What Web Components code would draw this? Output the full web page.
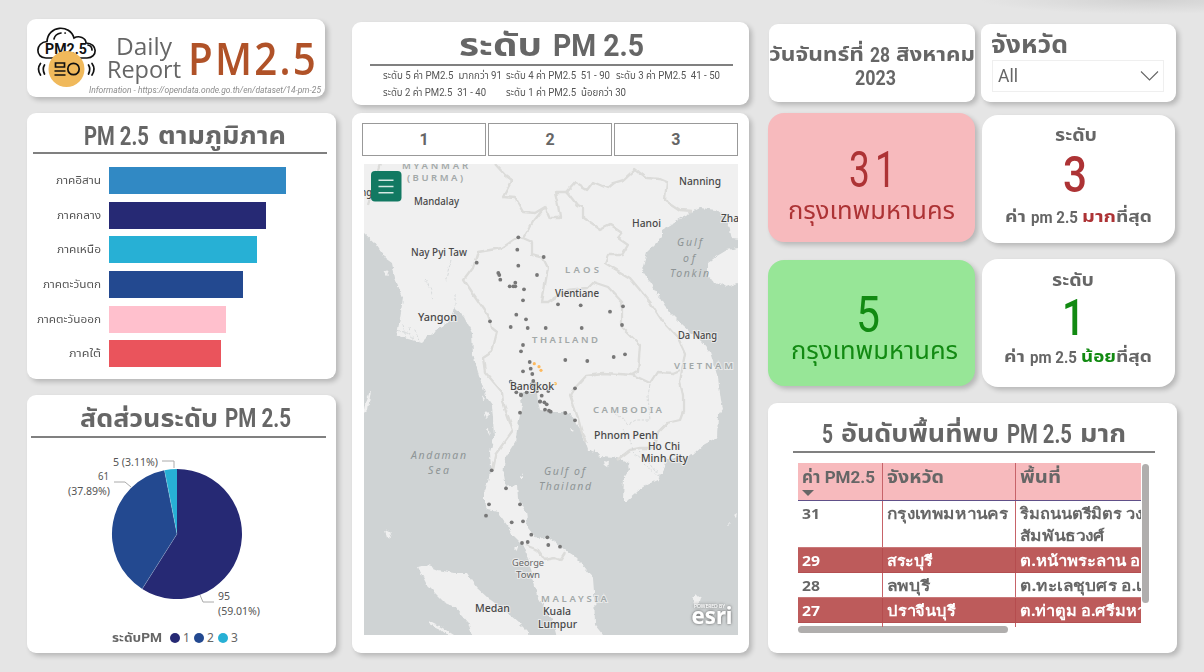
<!DOCTYPE html>
<html lang="th">
<head>
<meta charset="utf-8">
<title>PM2.5 Daily Report</title>
<style>
body { margin: 0; overflow: hidden; }
</style>
</head>
<body>
<pm-dashboard></pm-dashboard>
<script>
const FONT = 'Roboto, "Noto Sans Thai", "Noto Sans", sans-serif';

/* One line of text set in a box of fixed width: the glyphs are condensed or widened to fill it. */
class FitText extends HTMLElement {
  connectedCallback() {
    if (this.shadowRoot) return;
    const a = n => this.getAttribute(n);
    this.attachShadow({ mode: 'open' }).innerHTML = `<style>
      :host { display: block; flex: none; width: ${a('w')}px; height: ${a('h')}px; line-height: ${a('h')}px; font-size: ${a('s')}px; white-space: pre; }
      span { display: inline-block; transform-origin: 0 50%; line-height: inherit; vertical-align: top; }
    </style><span><slot></slot></span>`;
    const s = this.shadowRoot.querySelector('span');
    const width = s.getBoundingClientRect().width;
    if (width) s.style.transform = `scaleX(${(+a('w') / width).toFixed(4)})`;
  }
}

/* A row of fitted runs, for lines that mix Thai and Latin text. */
class TextLine extends HTMLElement {
  connectedCallback() {
    if (this.shadowRoot) return;
    this.attachShadow({ mode: 'open' }).innerHTML = `<style>
      :host { display: flex; flex: none; gap: var(--gap, 8px); }
    </style><slot></slot>`;
  }
}

class DashCard extends HTMLElement {
  connectedCallback() {
    if (this.shadowRoot) return;
    this.attachShadow({ mode: 'open' }).innerHTML = `<style>
      :host { display: flex; flex-direction: column; box-sizing: border-box; flex: none; background: #fff; border-radius: 9px; box-shadow: 3px 3px 5px rgba(0,0,0,.2); }
    </style><slot></slot>`;
  }
}

class ReportHeader extends HTMLElement {
  connectedCallback() {
    this.attachShadow({ mode: 'open' }).innerHTML = `<style>
      :host { display: block; font-family: "Open Sans", sans-serif; color: #666; }
      .row { display: flex; height: 64px; }
      svg { width: 64px; height: 64px; margin: 6px 0 0 8px; flex: none; }
      .t { display: flex; flex-direction: column; align-items: center; width: 74px; margin: 16px 0 0 8px; }
      .p { margin: 17px 0 0 7px; color: #b05228; font-weight: 600; letter-spacing: 2.500px; }
      .i { margin: 1px 0 0 62px; font-style: italic; color: #8c8c8c; font-family: Roboto, sans-serif; }
    </style>
    <div class="row">
      <svg viewBox="35 25 64 64" fill="none" stroke="#111" stroke-width="1.7" stroke-linecap="round">
        <path d="M46 58C35 58 35 42.500 47 41.500C48 25 70 24 74 38C79 35 86 38 86 43C98 43 98 58 87 58Z"/>
        <path d="M54 39Q55 34 61 33M65 33h.3M88 45Q92 46 92 50"/>
        <text x="45" y="54" textLength="42" lengthAdjust="spacingAndGlyphs" font-family="Roboto,sans-serif" font-weight="700" font-size="15.500" fill="#111" stroke="none">PM2.5</text>
        <circle cx="66.500" cy="69" r="18" fill="#f0b95b" stroke="none"/>
        <path stroke-linecap="butt" d="M55.500 63h9v4h-9zM54.500 71h11M54.500 75h11"/><circle cx="73.500" cy="69" r="5.700"/>
        <path d="M44.500 65Q42 69 44.500 74M40.500 63.500Q36.500 69 40.500 75M88.500 65Q91 69 88.500 74M92 63.500Q96 69 92 75"/>
      </svg>
      <div class="t"><fit-text w="56" h="23" s="23">Daily</fit-text><fit-text w="74" h="22" s="23">Report</fit-text></div>
      <fit-text class="p" w="130" h="43" s="45">PM2.5</fit-text>
    </div>
    <fit-text class="i" w="232" h="12" s="9">Information - https://opendata.onde.go.th/en/dataset/14-pm-25</fit-text>`;
  }
}

class LevelLegend extends HTMLElement {
  connectedCallback() {
    this.attachShadow({ mode: 'open' }).innerHTML = `<style>
      :host { display: flex; flex-direction: column; color: #555; }
      .h { margin: 5px 0 0 107px; color: #666; font-weight: 700; --gap: 11px; }
      .r { height: 2px; background: #808080; margin: 0 16px 0 18px; }
      .g { display: grid; grid-template-columns: 123px 110px 105px; grid-auto-rows: 17px; margin: 1px 0 0 31px; }
    </style>
    <text-line class="h"><fit-text w="83" h="37" s="32">ระดับ</fit-text><fit-text w="91" h="37" s="32">PM 2.5</fit-text></text-line>
    <div class="r"></div>
    <div class="g">
      <fit-text w="119" h="17" s="10">ระดับ 5 ค่า PM2.5  มากกว่า 91</fit-text>
      <fit-text w="104" h="17" s="10">ระดับ 4 ค่า PM2.5  51 - 90</fit-text>
      <fit-text w="104" h="17" s="10">ระดับ 3 ค่า PM2.5  41 - 50</fit-text>
      <fit-text w="103" h="17" s="10">ระดับ 2 ค่า PM2.5  31 - 40</fit-text>
      <fit-text w="120" h="17" s="10">ระดับ 1 ค่า PM2.5  น้อยกว่า 30</fit-text>
    </div>`;
  }
}

class RegionBars extends HTMLElement {
  connectedCallback() {
    const rows = [['ภาคอิสาน', 45, 176.500, '#3189c4'], ['ภาคกลาง', 44, 156.500, '#262974'], ['ภาคเหนือ', 44, 147.500, '#27b0d5'],
      ['ภาคตะวันตก', 58, 134, '#234990'], ['ภาคตะวันออก', 64, 116.500, '#ffc0cd'], ['ภาคใต้', 32, 111.500, '#ea545c']];
    this.attachShadow({ mode: 'open' }).innerHTML = `<style>
      :host { display: block; color: #555; }
      .h { margin: 8px 0 0 57px; color: #666; font-weight: 700; --gap: 9px; }
      .r { height: 2px; background: #808080; margin: 0 9px 13px 6px; }
      .b { display: flex; align-items: center; gap: 8px; height: 27px; margin-bottom: 7.700px; }
      .l { width: 74px; display: flex; justify-content: flex-end; padding-top: 1px; }
      .v { height: 27px; }
    </style>
    <text-line class="h"><fit-text w="65" h="31" s="25">PM 2.5</fit-text><fit-text w="128" h="31" s="24">ตามภูมิภาค</fit-text></text-line><div class="r"></div>
    ${rows.map(([n, w, v, c]) => `<div class="b"><div class="l"><fit-text w="${w}" h="20" s="11">${n}</fit-text></div><div class="v" style="width:${v}px;background:${c}"></div></div>`).join('')}`;
  }
}

class SharePie extends HTMLElement {
  connectedCallback() {
    this.attachShadow({ mode: 'open' }).innerHTML = `<style>
      :host { display: block; color: #666; }
      .h { margin: 8px 0 0 53px; font-weight: 700; --gap: 7px; }
      .r { height: 2px; background: #808080; margin: 1px 10px 1px 4px; }
      svg { display: block; width: 309px; height: 192px; font: 11px "Noto Sans", sans-serif; fill: #555; }
      .k { display: flex; align-items: center; height: 16px; margin: -1px 0 0 85px; font: 12px "Noto Sans", sans-serif; }
      .k i { width: 10px; height: 10px; border-radius: 50%; margin: 0 3px 0 4px; }
      .k span { width: 7px; line-height: 16px; }
      .k fit-text { font-weight: 700; margin-right: 4px; font-family: ${FONT.replace(/"/g, "'")}; }
    </style>
    <text-line class="h"><fit-text w="138" h="32" s="24">สัดส่วนระดับ</fit-text><fit-text w="66" h="32" s="25">PM 2.5</fit-text></text-line><div class="r"></div>
    <svg viewBox="27 439 309 192">
      <path fill="#262974" d="M177 534V469A65 65 0 1 1 142.200 588.900Z"/>
      <path fill="#234990" d="M177 534L142.200 588.900A65 65 0 0 1 164.400 470.200Z"/>
      <path fill="#27b0d5" d="M177 534L164.400 470.200A65 65 0 0 1 177 469Z"/>
      <path d="M177 534L142.200 588.900M177 534L164.400 470.200" stroke="#fff" stroke-opacity=".35" stroke-width=".6"/>
      <path d="M162 461h12v7M114 482h11l6 5M200 595l3 7h11" fill="none" stroke="#aaa"/>
      <text x="113" y="466" textLength="45" lengthAdjust="spacingAndGlyphs">5 (3.11%)</text>
      <text x="98" y="480" textLength="11" lengthAdjust="spacingAndGlyphs">61</text>
      <text x="68" y="495" textLength="42" lengthAdjust="spacingAndGlyphs">(37.89%)</text>
      <text x="218" y="600" textLength="12" lengthAdjust="spacingAndGlyphs">95</text>
      <text x="218" y="615" textLength="42" lengthAdjust="spacingAndGlyphs">(59.01%)</text>
    </svg>
    <div class="k"><fit-text w="50" h="16" s="13">ระดับPM</fit-text><i style="background:#262974"></i><span>1</span><i style="background:#234990"></i><span>2</span><i style="background:#27b0d5"></i><span>3</span></div>`;
  }
}

class LevelTabs extends HTMLElement {
  connectedCallback() {
    this.attachShadow({ mode: 'open' }).innerHTML = `<style>
      :host { display: grid; grid-template-columns: repeat(3, 1fr); gap: 1.500px; margin: 10px 11px 0 10px; height: 33px; flex: none; }
      div { border: 1px solid #999; text-align: center; font: 700 16px/31px ${FONT}; color: #666; }
    </style><div>1</div><div>2</div><div>3</div>`;
  }
}

class PmMap extends HTMLElement {
  connectedCallback() {
    const grey = [
      [355, 155, [490,247,487,284,490,332,566,306,365,323,430,354,433,360,436,374,481,383,464,394,475,394,481,394,507,403,546,360,504,436,484,479,513,493,405,499,467,516,518,519,572,519,504,570,498,589,524,621,527,641,532,657,504,649,467,680,484,712,498,720,535,678,530,688,540,688,535,695,515,712,546,708,560,722,555,740,580,708]],
      [550, 155, [24,448,92,451,180,470,219,454,216,510,95,519,46,615,112,618,191,606,225,598,75,700]],
      [355, 395, [498,0,555,19,568,22,575,28,570,44,582,47,495,53,410,226,453,280,402,328,393,362,495,328,470,382,504,379,529,419,501,444,518,441,577,427,580,450]],
      [550, 395, [2,50,46,54,75,76,30,455]]];
    const amber = [[355, 155, [538,626,552,635,558,646,601,686]]];
    const dots = (sets, r) => sets.map(([ox, oy, p]) => {
      let s = '';
      for (let i = 0; i < p.length; i += 2) s += `<circle cx="${(ox + p[i] / 3).toFixed(1)}" cy="${(oy + p[i + 1] / 3).toFixed(1)}" r="${r}"/>`;
      return s;
    }).join('');
    const t = (x, y, w, s) => `<text x="${x}" y="${y}" textLength="${w}" lengthAdjust="spacingAndGlyphs">${s}</text>`;
    const sp = (x, y, w, s) => `<text x="${x}" y="${y}" textLength="${w}">${s}</text>`;
    this.attachShadow({ mode: 'open' }).innerHTML = `<style>
      :host { display: block; margin: 8px 0 0 12px; width: 374px; height: 471px; }
      svg { display: block; width: 374px; height: 471px; background: #f0f0f0; font-family: "Noto Sans", sans-serif; }
      .halo text { paint-order: stroke; stroke: #f0f0f0; stroke-width: 2px; stroke-opacity: .8; }
    </style>
    <svg viewBox="364 164 374 471">
      <defs>
        <filter id="rough" x="-5%" y="-5%" width="110%" height="110%"><feTurbulence type="fractalNoise" baseFrequency=".16" numOctaves="3" seed="4"/><feDisplacementMap in="SourceGraphic" scale="5" xChannelSelector="R" yChannelSelector="G"/></filter>
        <filter id="soft" x="-5%" y="-5%" width="110%" height="110%"><feTurbulence type="fractalNoise" baseFrequency=".1" numOctaves="2" seed="9"/><feDisplacementMap in="SourceGraphic" scale="4" xChannelSelector="R" yChannelSelector="G"/></filter>
        <filter id="glow"><feDropShadow dx="0" dy="0" stdDeviation="1.500" flood-color="#555"/></filter>
      </defs>
      <g filter="url(#rough)">
        <g fill="#cfd3d4">
          <path d="M340 225L364 233L375 243L385 258L392 263L395 278L403 298L400 318L397 335L408 339L422 343L433 332L447 323L453 315L455 308L465 318L472 332L473 355L478 372L483 388L487 398L492 405L493 418L494 438L490 452L491 467L488 482L484 492L484 502L488 510L498 512L507 525L513 535L525 547L529 562L533 578L537 595L545 608L553 622L560 650L340 650Z"/>
          <path d="M603 650V635L595 625L594 592L593 578L583 565L573 555L565 550L555 542L548 537L537 539L528 528L526 512L518 498L517 485L505 487L503 475L505 458L515 442L518 425L522 405L520 393L530 391L537 393L538 402L540 410L552 412L565 412L575 420L583 435L588 450L594 450L600 457L617 458L628 463L629 470L624 478L623 500L628 500L643 487L658 480L665 467L667 458L680 459L693 455L705 444L717 438L718 415L723 408L721 400L718 378L710 352L702 342L683 325L665 307L658 295L652 285L642 270L647 252L662 237L662 230L683 217L700 208L717 210L727 218L732 238L760 241V650Z"/>
        </g>
        <g fill="#f0f0f0">
          <path d="M760 248L738 248L727 250L717 256L708 263L708 278L718 284L727 287L738 283L760 280Z"/>
          <path d="M418 567L425 565L438 570L455 573L467 573L477 588L488 598L502 608L518 622L528 632L529 650H472V635L468 622L455 607L445 603L427 585Z"/>
          <path d="M429 624L440 629L447 635H454L441 627L431 622ZM385 530l4 2 2 7-4-1zM366 404l4-14 1 0-3 20-4 4zM604 461l4 1-1 5-2-1zM590 450l4 0-1 4zM693 599l4-4 4 3-2 6-5-1zM514 547l4 0-1 3zM484 415l3-4 2 5-3 3zM487 430l2-1 1 6zM520 478l2-4 0 4zM726 526l4-4 1 1zM734 516l3-2-1 4zM378 512l2 2zM644 624l2-3zM609 624l2 3zM610 430l2 0zM570 428l4 3-3 1zM384 273l5-2-2 5zM482 395l3 4-2 1zM480 377l2 8z"/>
        </g>
        <path d="M425 280l6 9 2 11M451 260l-6 22M455 310v-16M403 323l3 16M409 328l4 13M415 330l4 11M397 330l13 4M638 451l8 7 15 20M632 450l14 15 14 13" stroke="#cfd3d4" stroke-width=".8" stroke-dasharray="3 1.500" fill="none"/>
      </g>
      <g filter="url(#soft)">
        <path fill="none" stroke="#dcdcda" stroke-width="2.300" stroke-linejoin="round" d="M380 164L377 174L368 205M495 164L505 175L512 180L503 197L515 198L523 212L535 213L545 207L550 218L560 218L558 205L555 192L567 192L575 183L587 190L593 182L607 188L613 183L623 180L635 169L647 178L660 179L667 182L665 200L680 210L693 211M567 192L577 205L583 208L583 218L600 230L610 225L622 233L618 238L628 245L622 255L608 255L605 263L630 278L650 302L663 322L678 338L685 353L680 382L683 395L683 412L680 420L667 423L658 432L655 448L640 448L630 450L617 460M545 207L533 222L523 238L518 237L502 248L478 252L473 268L464 280L472 292L488 315L492 328L497 332L492 352L483 358L485 372L502 392L503 402L513 430L495 455L492 470M523 238L532 242L532 255L543 258L548 268L542 302L548 302L567 290L587 288L593 282L608 287L622 302L622 327L640 345L638 372L633 375L603 373L587 375L573 390L570 395L578 418L582 433L587 442M633 375L650 383L657 372L673 373L680 370M525 545L538 550L545 560L555 558L560 560L565 552"/>
        <path fill="none" stroke="#d2d4d4" stroke-width=".8" stroke-dasharray="3 1.500" d="M650 385L648 395L650 420L636 420L628 424L614 412M633 450L630 440L623 428"/>
      </g>
      <g fill="#777">${dots(grey, 1.9)}</g><g fill="#fdb95e">${dots(amber, 1.6)}</g>
      <g class="halo">
        <g fill="#a2a8a8" font-size="9.500" font-weight="600">${sp(402,169,66,'MYANMAR')}${sp(407,181,56,'(BURMA)')}${sp(565,273,34,'LAOS')}${sp(532,343,66,'THAILAND')}${sp(674,369,59,'VIETNAM')}${sp(593,413,69,'CAMBODIA')}${sp(541,602,66,'MALAYSIA')}</g>
        <g fill="#484848" font-size="10.500" font-weight="500">${t(414,205,45,'Mandalay')}${t(411,256,56,'Nay Pyi Taw')}${t(418,321,39,'Yangon')}${t(679,185,42,'Nanning')}${t(632,227,29,'Hanoi')}${t(721,222,27,'Zhanj')}${t(555,297,44,'Vientiane')}${t(678,339,39,'Da Nang')}${t(510,390,44,'Bangkok')}${t(594,439,64,'Phnom Penh')}${t(648,450,32,'Ho Chi')}${t(641,462,47,'Minh City')}${t(475,612,35,'Medan')}${t(543,615,28,'Kuala')}${t(538,628,39,'Lumpur')}${t(355,196,17,'ong')}</g>
        <g fill="#666" font-size="9.500">${t(512,566,32,'George')}${t(516,578,24,'Town')}</g>
      </g>
      <g fill="#8e9596" font-size="10.500" font-style="italic">${sp(411,459,55,'Andaman')}${sp(428,474,21,'Sea')}${sp(544,475,41,'Gulf of')}${sp(539,490,52,'Thailand')}${sp(677,246,25,'Gulf')}${sp(683,262,12,'of')}${sp(670,277,39,'Tonkin')}</g>
      <g fill="#fff" filter="url(#glow)"><text x="691.500" y="624" font-size="24" font-weight="700" textLength="41" lengthAdjust="spacingAndGlyphs">esri</text><text x="694" y="608" font-size="4.500" textLength="31" lengthAdjust="spacingAndGlyphs">POWERED BY</text></g>
      <rect x="371" y="171" width="30.500" height="30.500" rx="4" fill="#127962"/>
      <path d="M378.500 180.200h15M378.500 186.500h15M378.500 192.800h15" stroke="#d6e9e4" stroke-width="1.500"/>
    </svg>`;
  }
}

class ProvinceFilter extends HTMLElement {
  connectedCallback() {
    this.attachShadow({ mode: 'open' }).innerHTML = `<style>
      :host { display: block; color: #666; }
      .h { margin: 5px 0 0 10px; font-weight: 700; }
      .s { display: flex; align-items: center; justify-content: space-between; box-sizing: border-box; width: 172px; height: 32px; margin: -1px 0 0 11px; padding: 0 4px 0 5px; border: 1px solid #efefef; }
    </style>
    <fit-text class="h" w="77" h="32" s="24">จังหวัด</fit-text>
    <div class="s"><fit-text w="20" h="30" s="19">All</fit-text><svg width="19" height="12" fill="none" stroke="#666" stroke-width="1.100"><path d="M1 1.500L9.500 10L18 1.500"/></svg></div>`;
  }
}

class RankTable extends HTMLElement {
  connectedCallback() {
    const rows = [['31', 'กรุงเทพมหานคร', 121, 'ริมถนนตรีมิตร วงเวียน', 158, 46], ['29', 'สระบุรี', 46, 'ต.หน้าพระลาน อ.เฉลิม', 163, 25.500], ['28', 'ลพบุรี', 43, 'ต.ทะเลชุบศร อ.เมือง', 152, 24], ['27', 'ปราจีนบุรี', 69, 'ต.ท่าตูม อ.ศรีมหาโพธิ', 155, 26]];
    this.attachShadow({ mode: 'open' }).innerHTML = `<style>
      :host { display: block; color: #666; font-weight: 700; }
      .h { margin: 15px 0 0 54px; }
      .r { height: 2px; background: #808080; margin: 0 22px 10px 25px; }
      .area { display: flex; gap: 1px; margin-left: 29.500px; }
      .tb { width: 343.500px; height: 164px; overflow: hidden; flex: none; }
      .row { display: grid; grid-template-columns: 85px 133px 126px; box-sizing: border-box; }
      .row > div { border-right: 1px solid #c76369; padding-left: 4.500px; overflow: hidden; box-sizing: border-box; font-family: "Noto Sans", sans-serif; }
      .row > div:last-child { border-right: 0; }
      .hd { height: 38px; background: #f7babd; border-bottom: 1px solid #605089; }
      .hd > div { padding-top: 2px; font-family: ${FONT}; }
      .alt { background: #bd5b5b; color: #fff; border-top: 1px solid #c9797a; border-bottom: 1px solid #b34f51; }
      .alt > div { border-color: #b54c4e; }
      .sub { margin-top: -2px; }
      .sv { width: 7px; height: 139px; margin-top: 1px; background: #b0aead; border-radius: 4px; }
      .sh { width: 210px; height: 7px; background: #b0aead; border-radius: 4px; margin: -1px 0 0 30px; }
    </style>
    <text-line class="h"><fit-text w="11" h="33" s="25">5</fit-text><fit-text w="158" h="33" s="24">อันดับพื้นที่พบ</fit-text><fit-text w="65" h="33" s="25">PM 2.5</fit-text><fit-text w="46" h="33" s="24">มาก</fit-text></text-line><div class="r"></div>
    <div class="area"><div class="tb">
      <div class="row hd"><div><fit-text w="73" h="25" s="17">ค่า PM2.5</fit-text><svg style="display:block" width="12" height="6"><path d="M0 0H12L6 6Z" fill="#666"/></svg></div><div><fit-text w="57" h="25" s="17">จังหวัด</fit-text></div><div><fit-text w="41" h="25" s="17">พื้นที่</fit-text></div></div>
      ${rows.map(([v, p, pw, a, aw, h], i) => `<div class="row ${i % 2 ? 'alt' : ''}" style="height:${h}px"><div><fit-text w="18" h="24" s="15">${v}</fit-text></div><div><fit-text w="${pw}" h="24" s="15">${p}</fit-text></div><div><fit-text w="${aw}" h="24" s="15">${a}</fit-text>${i ? '' : '<fit-text class="sub" w="85" h="24" s="15">สัมพันธวงศ์</fit-text>'}</div></div>`).join('')}
      <div class="row" style="height:4px"><div></div><div></div><div></div></div>
    </div><div class="sv"></div></div><div class="sh"></div>`;
  }
}

class PmDashboard extends HTMLElement {
  connectedCallback() {
    this.attachShadow({ mode: 'open' }).innerHTML = `<style>
      :host { display: flex; box-sizing: border-box; width: 1204px; height: 672px; padding-left: 27px; gap: 16px; font-family: ${FONT}; color: #666;
        background: radial-gradient(ellipse 170px 14px at 1150px 0, #d2d2d2, transparent), #e5e5e5; }
      .c1 { width: 309px; padding-top: 19px; } .c2 { width: 397px; padding-top: 22px; margin-right: 3px; } .c3 { width: 409px; padding-top: 24px; }
      .top { display: flex; gap: 6px; padding-left: 1px; }
      .kpis { display: grid; grid-template-columns: 207px 193px; column-gap: 7px; align-items: start; margin-top: 11px; }
      .kpis dash-card { align-items: center; border-radius: 16px; font-weight: 700; }
      .red { background: #f7babd; color: #ad3335; } .green { background: #97e697; color: #128a12; }
      .kpis .reg { font-weight: 400; }
      .kpis .n { font-weight: 500; }
      .m { color: #ad3335; } .g { color: #128a12; }
      .date { align-items: center; font-weight: 700; padding-top: 18px; }
      .cap { --gap: 0px; }
      .cap .sp { margin: 0 4px 0 5px; }
    </style>
    <div class="c1">
      <dash-card style="width:298px;height:78px"><report-header></report-header></dash-card>
      <dash-card style="height:266px;margin-top:16px"><region-bars></region-bars></dash-card>
      <dash-card style="height:258px;margin-top:16px"><share-pie></share-pie></dash-card>
    </div>
    <div class="c2">
      <dash-card style="height:83px"><level-legend></level-legend></dash-card>
      <dash-card style="height:540px;margin-top:8px"><level-tabs></level-tabs><pm-map></pm-map></dash-card>
    </div>
    <div class="c3">
      <div class="top">
        <dash-card class="date" style="width:206px;height:78px"><text-line style="--gap:6px"><fit-text w="95" h="26" s="19.500">วันจันทร์ที่</fit-text><fit-text w="20" h="26" s="20">28</fit-text><fit-text w="79" h="26" s="19.500">สิงหาคม</fit-text></text-line><fit-text w="41" h="20" s="20" style="margin-left:6px">2023</fit-text></dash-card>
        <dash-card style="width:195px;height:78px"><province-filter></province-filter></dash-card>
      </div>
      <div class="kpis">
        <dash-card class="red" style="height:129px"><fit-text class="reg" w="52" h="50" s="50" style="margin:32px 0 0 6px;letter-spacing:7px">31</fit-text><fit-text class="reg" w="167" h="34" s="24" style="margin-top:-1px">กรุงเทพมหานคร</fit-text></dash-card>
        <dash-card style="height:128px;margin-top:2px"><fit-text w="42" h="26" s="17" style="margin:7px 6px 0 0">ระดับ</fit-text><fit-text class="n" w="24" h="50" s="50" style="margin:2px 8px 0 0;color:#ad3335">3</fit-text><text-line class="cap" style="margin-top:4px"><fit-text w="21" h="26" s="16.500">ค่า</fit-text><fit-text class="sp" w="47" h="26" s="17">pm 2.5</fit-text><fit-text class="m" w="34" h="26" s="16.500">มาก</fit-text><fit-text w="36" h="26" s="16.500">ที่สุด</fit-text></text-line></dash-card>
      </div>
      <div class="kpis" style="margin-top:16px">
        <dash-card class="green" style="height:126px;margin-top:1px"><fit-text class="reg" w="24" h="50" s="50" style="margin:30px 8px 0 0">5</fit-text><fit-text class="reg" w="167" h="34" s="24" style="margin:-6px 0 0 6px">กรุงเทพมหานคร</fit-text></dash-card>
        <dash-card style="height:128px"><fit-text w="42" h="26" s="17" style="margin:8px 12px 0 0">ระดับ</fit-text><fit-text class="n" w="23" h="50" s="50" style="margin:0 11px 0 0;color:#128a12">1</fit-text><text-line class="cap" style="margin:1px 2px 0 0"><fit-text w="21" h="26" s="16.500">ค่า</fit-text><fit-text class="sp" w="47" h="26" s="17">pm 2.5</fit-text><fit-text class="g" w="35" h="26" s="16.500">น้อย</fit-text><fit-text w="36" h="26" s="16.500">ที่สุด</fit-text></text-line></dash-card>
      </div>
      <dash-card style="height:250px;margin-top:16px"><rank-table></rank-table></dash-card>
    </div>`;
  }
}

customElements.define('fit-text', FitText);
customElements.define('text-line', TextLine);
customElements.define('dash-card', DashCard);
customElements.define('report-header', ReportHeader);
customElements.define('level-legend', LevelLegend);
customElements.define('region-bars', RegionBars);
customElements.define('share-pie', SharePie);
customElements.define('level-tabs', LevelTabs);
customElements.define('pm-map', PmMap);
customElements.define('province-filter', ProvinceFilter);
customElements.define('rank-table', RankTable);
customElements.define('pm-dashboard', PmDashboard);
</script>
</body>
</html>
